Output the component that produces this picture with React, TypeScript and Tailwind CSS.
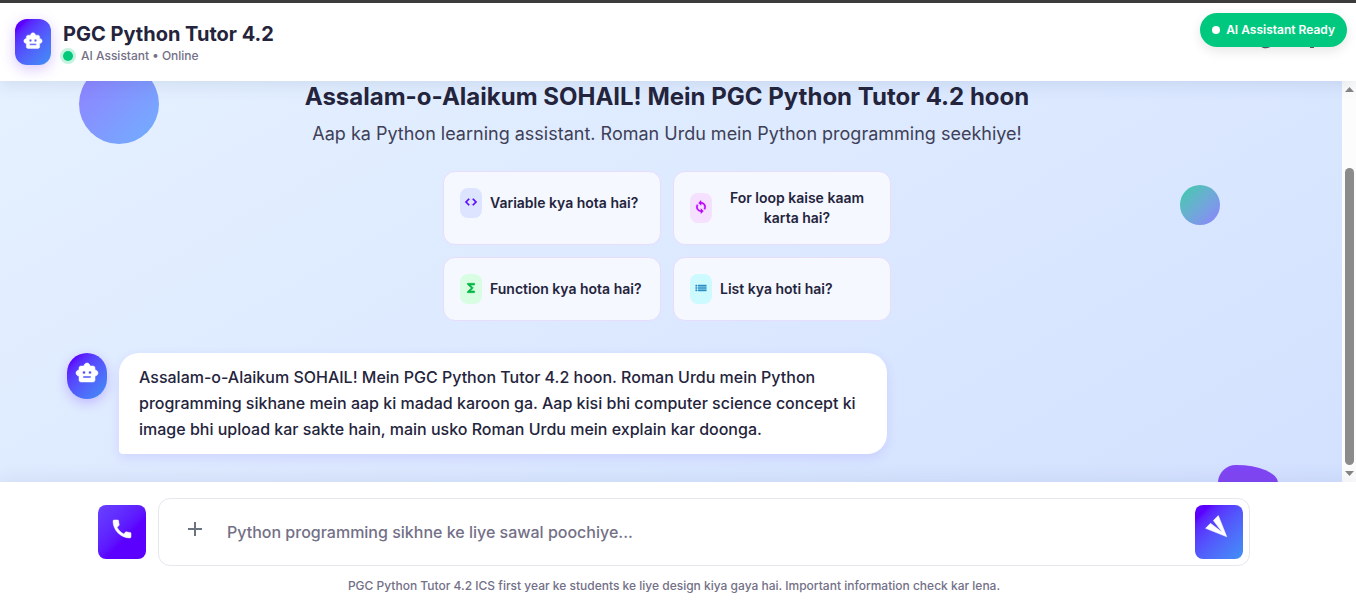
import { MdAdd, MdSettings, MdHelp } from "react-icons/md";

const glyphs = {
  robot:
    "M20 9V7c0-1.1-.9-2-2-2h-3c0-1.66-1.34-3-3-3S9 3.34 9 5H6c-1.1 0-2 .9-2 2v2c-1.66 0-3 1.34-3 3s1.34 3 3 3v4c0 1.1.9 2 2 2h12c1.1 0 2-.9 2-2v-4c1.66 0 3-1.34 3-3s-1.34-3-3-3zM7.5 11.5c0-.83.67-1.5 1.5-1.5s1.5.67 1.5 1.5S9.83 13 9 13s-1.5-.67-1.5-1.5zM16 17H8v-2h8v2zm-1-4c-.83 0-1.5-.67-1.5-1.5S14.17 10 15 10s1.5.67 1.5 1.5S15.83 13 15 13z",
  code: "M9.4 16.6 4.8 12l4.6-4.6L8 6l-6 6 6 6 1.4-1.4zm5.2 0 4.6-4.6-4.6-4.6L16 6l6 6-6 6-1.4-1.4z",
  sync: "M12 4V1L8 5l4 4V6c3.31 0 6 2.69 6 6 0 1.01-.25 1.97-.7 2.8l1.46 1.46C19.54 15.03 20 13.57 20 12c0-4.42-3.58-8-8-8zm0 14c-3.31 0-6-2.69-6-6 0-1.01.25-1.97.7-2.8L5.24 7.74C4.46 8.97 4 10.43 4 12c0 4.42 3.58 8 8 8v3l4-4-4-4v3z",
  sigma: "M18 4H6v2l6.5 6L6 18v2h12v-3h-7l5-5-5-5h7z",
  list: "M3 13h2v-2H3v2zm0 4h2v-2H3v2zm0-8h2V7H3v2zm4 4h14v-2H7v2zm0 4h14v-2H7v2zM7 7v2h14V7H7z",
  call: "M20.01 15.38c-1.23 0-2.42-.2-3.53-.56a.977.977 0 0 0-1.01.24l-1.57 1.97c-2.83-1.35-5.48-3.9-6.89-6.83l1.95-1.66c.27-.28.35-.67.24-1.02-.37-1.11-.56-2.3-.56-3.53 0-.54-.45-.99-.99-.99H4.19C3.65 3 3 3.24 3 3.99 3 13.28 10.73 21 20.01 21c.71 0 .99-.63.99-1.18v-3.45c0-.54-.45-.99-.99-.99z",
  send: "M2.01 21 23 12 2.01 3 2 10l15 2-15 2z",
};

type GlyphName = keyof typeof glyphs;

function Glyph({ name, className }: { name: GlyphName; className: string }) {
  return (
    <svg viewBox="0 0 24 24" fill="currentColor" stroke="currentColor" className={className} aria-hidden="true">
      <path d={glyphs[name]} />
    </svg>
  );
}

const prompts: { text: string; icon: GlyphName; tint: string }[] = [
  { text: "Variable kya hota hai?", icon: "code", tint: "bg-[#dde4ff] text-[#5b0cff]" },
  { text: "For loop kaise kaam karta hai?", icon: "sync", tint: "bg-[#f6e0ff] text-[#b800ff]" },
  { text: "Function kya hota hai?", icon: "sigma", tint: "bg-[#d8fde3] text-[#00b843]" },
  { text: "List kya hoti hai?", icon: "list", tint: "bg-[#cdfaff] text-[#2b8fc4]" },
];

function Header() {
  return (
    <header className="relative z-10 flex h-[81px] shrink-0 items-center justify-between border-t-3 border-[#3c3c3c] bg-white pr-[34px] pl-[15px] shadow-[0_4px_16px_rgba(60,80,130,0.12)]">
      <div className="flex items-center gap-3">
        <div className="flex h-[46px] w-9 items-start justify-center rounded-xl bg-linear-135 from-[#5b00ff] from-15% to-[#4090f5] pt-3 text-white shadow-[0_4px_14px_rgba(110,30,255,0.25)]">
          <Glyph name="robot" className="size-5 stroke-[0.5]" />
        </div>
        <div className="pt-1">
          <h1 className="text-xl leading-6 font-bold text-[#24243c]">PGC Python Tutor 4.2</h1>
          <p className="flex h-5 items-center gap-2 text-xs font-medium text-[#737087]">
            <span className="size-2.5 rounded-full bg-[#00c97b] ring-3 ring-[#c5f3e0]" />
            AI Assistant • Online
          </p>
        </div>
      </div>
      <div className="mb-1 flex gap-[26px] text-[#5b5a70]">
        <button aria-label="Help"><MdHelp size={20} /></button>
        <button aria-label="Settings"><MdSettings size={20} /></button>
      </div>
      <div className="absolute top-[10px] right-[9px] flex h-[34px] items-center gap-1.5 rounded-full bg-[#00c97f] px-3 text-xs font-semibold text-white shadow-[0_4px_12px_rgba(0,0,0,0.1)]">
        <span className="size-2 rounded-full bg-white" />
        AI Assistant Ready
      </div>
    </header>
  );
}

function Scrollbar() {
  return (
    <div className="flex w-3.5 shrink-0 flex-col items-center bg-[#fcfcfc] pt-1.5 pb-1.5 pl-px" aria-hidden="true">
      <svg className="h-[5px] w-[9px] shrink-0 fill-[#858585]" viewBox="0 0 9 5"><path d="M4.5 0 9 5H0z" /></svg>
      <div className="mt-19 mb-1.5 w-[9px] flex-1 rounded-full bg-[#8b8b8b]" />
      <svg className="h-[5px] w-[9px] shrink-0 fill-[#858585]" viewBox="0 0 9 5"><path d="M0 0h9L4.5 5z" /></svg>
    </div>
  );
}

export default function App() {
  return (
    <div className="flex h-screen flex-col overflow-hidden bg-white font-['Inter',sans-serif] text-[#24243c]">
      <Header />
      <div className="flex min-h-0 flex-1">
        <main className="relative flex-1 overflow-hidden bg-linear-150 from-[#e5f1ff] to-[#d3e1ff]">
          <span className="absolute -top-[17px] left-[79px] size-20 rounded-full bg-linear-135 from-[#907dff] to-[#6eafff]" />
          <span className="absolute top-[104px] right-[122px] size-10 rounded-full bg-linear-135 from-[#32cda5] to-[#8b7fff]" />
          <span className="absolute -bottom-[43px] right-16 size-15 rounded-[30%_70%_70%_30%/30%_30%_70%_70%] bg-[#8045f4]" />

          <section className="relative flex flex-col items-center pr-2 text-center">
            <h2 className="text-2xl leading-8 font-bold">Assalam-o-Alaikum SOHAIL! Mein PGC Python Tutor 4.2 hoon</h2>
            <p className="mt-[7px] text-lg leading-7 text-[#3f3f57]">Aap ka Python learning assistant. Roman Urdu mein Python programming seekhiye!</p>
            <div className="mt-[23px] grid w-[448px] grid-cols-2 gap-3">
              {prompts.map((p) => (
                <button key={p.text} className="flex items-start rounded-xl border border-[#e8dcfd] bg-[#f5f8ff] p-4 text-sm font-semibold">
                  <span className="flex w-full items-center gap-2">
                    <span className={`flex h-[30px] w-[22px] shrink-0 items-start justify-center rounded-lg pt-[7px] ${p.tint}`}>
                      <Glyph name={p.icon} className="size-3.5 stroke-1" />
                    </span>
                    <span className="text-center">{p.text}</span>
                  </span>
                </button>
              ))}
            </div>
          </section>

          <section className="relative mt-8 flex items-start gap-3 pl-[67px]">
            <div className="flex h-[46px] w-10 shrink-0 justify-center rounded-[20px] bg-linear-135 from-[#5b00ff] from-15% to-[#4090f5] pt-2 text-white shadow-[0_4px_12px_rgba(110,30,255,0.25)]">
              <Glyph name="robot" className="size-6 stroke-[0.5]" />
            </div>
            <p className="max-w-3xl rounded-[20px] rounded-bl-sm bg-white px-5 pt-[11px] pb-3 text-base leading-[26px] font-medium shadow-[0_4px_12px_rgba(110,60,255,0.12)]">
              Assalam-o-Alaikum SOHAIL! Mein PGC Python Tutor 4.2 hoon. Roman Urdu mein Python programming sikhane mein aap ki madad karoon ga. Aap kisi bhi computer science concept ki image bhi upload kar sakte hain, main usko Roman Urdu mein explain kar doonga.
            </p>
          </section>
        </main>
        <Scrollbar />
      </div>

      <footer className="relative z-10 shrink-0 bg-white pt-4 pr-[106px] pb-2 pl-[98px] shadow-[0_-4px_16px_rgba(60,80,130,0.08)]">
        <form className="mx-auto flex max-w-6xl items-center gap-3" onSubmit={(e) => e.preventDefault()}>
          <button type="button" aria-label="Call" className="flex h-[54px] w-12 shrink-0 justify-center rounded-lg bg-linear-135 from-[#6840ff] to-[#5b00ff] to-60% pt-3 text-white">
            <Glyph name="call" className="size-6 stroke-[0.5]" />
          </button>
          <div className="flex h-17 flex-1 items-center rounded-xl border border-[#e5e7eb] pr-1.5 pl-6">
            <button type="button" aria-label="Add image" className="flex h-[30px] w-6 shrink-0 justify-center text-[#6b7280]">
              <MdAdd size={24} />
            </button>
            <input aria-label="Message" className="ml-5 min-w-0 flex-1 text-base font-medium outline-none placeholder:text-[#737087]" placeholder="Python programming sikhne ke liye sawal poochiye..." />
            <button type="submit" aria-label="Send" className="flex h-[54px] w-12 shrink-0 justify-center rounded-lg bg-linear-135 from-[#5b00ff] from-15% to-[#4090f5] pt-3 text-white">
              <Glyph name="send" className="size-6 rotate-45 stroke-[0.5]" />
            </button>
          </div>
        </form>
        <p className="mt-3 text-center text-xs leading-4 font-medium text-[#737087]">
          PGC Python Tutor 4.2 ICS first year ke students ke liye design kiya gaya hai. Important information check kar lena.
        </p>
      </footer>
    </div>
  );
}
